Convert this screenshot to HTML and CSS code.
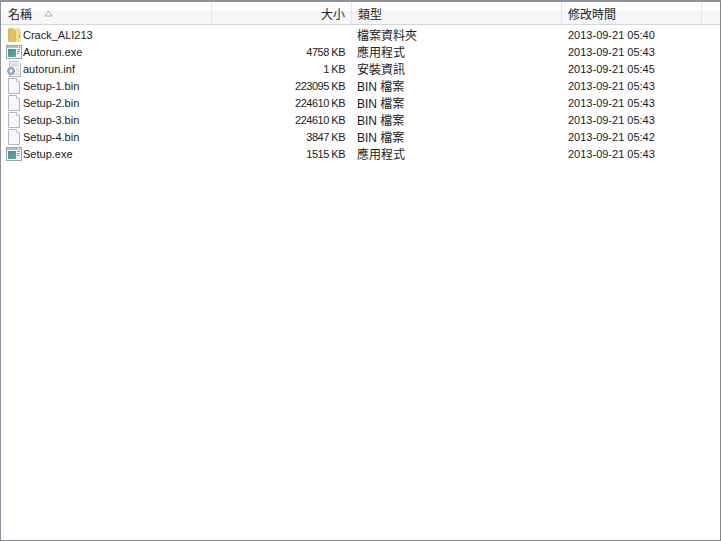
FILE: index.html
```html
<!DOCTYPE html>
<html lang="zh-Hant">
<head>
<meta charset="utf-8">
<title>檔案清單</title>
<link rel="stylesheet" href="styles.css">
</head>
<body>
<svg class="defs" width="0" height="0" aria-hidden="true">
  <defs>
    <linearGradient id="folderBack" x1="0" y1="0" x2="1" y2="0">
      <stop offset="0" stop-color="#d8b455"/><stop offset="1" stop-color="#e5c874"/>
    </linearGradient>
    <linearGradient id="folderFront" x1="0" y1="0" x2="1" y2="0">
      <stop offset="0" stop-color="#fbeeb8"/><stop offset="1" stop-color="#ecd07c"/>
    </linearGradient>
    <linearGradient id="appGrad" x1="0" y1="0" x2="1" y2="1">
      <stop offset="0" stop-color="#3f86b4"/><stop offset="1" stop-color="#6aae7f"/>
    </linearGradient>
    <symbol id="folder" viewBox="0 0 16 16">
      <path d="M2 2.500 Q2 1 3.500 1 L7 1 L7 15 L3.500 15 Q2 15 2 13.500Z" fill="url(#folderBack)"/>
      <path d="M7 1.500 L13 1 Q14.500 1 14.500 2.500 L14.500 14 Q14.500 15 13 15 L7 15Z" fill="url(#folderFront)"/>
      <path d="M7 1.500 L10 3 L10 15 L7 15Z" fill="#e2bd5c"/>
      <rect x="13" y="8" width="1" height="2" fill="#6c97c9"/>
    </symbol>
    <symbol id="app" viewBox="0 0 16 16">
      <rect x="0.500" y="1.500" width="15" height="13" fill="#f6f8fb" stroke="#98a3af"/>
      <rect x="1" y="2" width="14" height="2" fill="#b6bfc9"/>
      <rect x="12" y="2" width="1" height="1" fill="#fff"/>
      <rect x="14" y="2" width="1" height="1" fill="#fff"/>
      <rect x="2" y="5" width="8" height="8" fill="url(#appGrad)"/>
      <rect x="11" y="5" width="3" height="1" fill="#7f97b0"/>
      <rect x="11" y="7" width="3" height="1" fill="#7f97b0"/>
      <rect x="11" y="9" width="2" height="1" fill="#7f97b0"/>
    </symbol>
    <symbol id="blank" viewBox="0 0 16 16">
      <path d="M2.500 0.500 L10.500 0.500 L13.500 3.500 L13.500 15.500 L2.500 15.500Z" fill="#f7f7f7" stroke="#b0b3b8"/>
      <path d="M10.500 0.500 L10.500 3.500 L13.500 3.500" fill="#fff" stroke="#c2c5ca"/>
    </symbol>
    <symbol id="inf" viewBox="0 0 16 16">
      <path d="M3.500 0.500 L12 0.500 L14.500 3 L14.500 15.500 L3.500 15.500Z" fill="#f7f8f9" stroke="#b3b7bd"/>
      <path d="M5 3H12M5 5H13M10 8H13M11 10H13M5 13H13" stroke="#bfc4cb"/>
      <circle cx="5" cy="10" r="3.500" fill="#9ab2ca" stroke="#5f7993" stroke-dasharray="1.500 1"/>
      <circle cx="5" cy="10" r="1.500" fill="#eef3f8"/>
    </symbol>
  </defs>
</svg>
<main class="frame">
  <header class="head">
    <div class="hcell name-h">名稱<svg class="sort" width="9" height="7" viewBox="0 0 9 7"><path d="M4.500 1 L8 6 L1 6Z" fill="#fff" stroke="#a7acb3"/></svg></div>
    <div class="hcell size-h">大小</div>
    <div class="hcell type-h">類型</div>
    <div class="hcell date-h">修改時間</div>
    <div class="hcell rest-h"></div>
  </header>
  <ul class="list">
    <li class="row"><span class="name"><svg class="ic"><use href="#folder"/></svg>Crack_ALI213</span><span class="size"></span><span class="type">檔案資料夾</span><span class="date">2013-09-21 05:40</span></li>
    <li class="row"><span class="name"><svg class="ic"><use href="#app"/></svg>Autorun.exe</span><span class="size">4758 KB</span><span class="type">應用程式</span><span class="date">2013-09-21 05:43</span></li>
    <li class="row"><span class="name"><svg class="ic"><use href="#inf"/></svg>autorun.inf</span><span class="size">1 KB</span><span class="type">安裝資訊</span><span class="date">2013-09-21 05:45</span></li>
    <li class="row"><span class="name"><svg class="ic"><use href="#blank"/></svg>Setup-1.bin</span><span class="size">223095 KB</span><span class="type">BIN 檔案</span><span class="date">2013-09-21 05:43</span></li>
    <li class="row"><span class="name"><svg class="ic"><use href="#blank"/></svg>Setup-2.bin</span><span class="size">224610 KB</span><span class="type">BIN 檔案</span><span class="date">2013-09-21 05:43</span></li>
    <li class="row"><span class="name"><svg class="ic"><use href="#blank"/></svg>Setup-3.bin</span><span class="size">224610 KB</span><span class="type">BIN 檔案</span><span class="date">2013-09-21 05:43</span></li>
    <li class="row"><span class="name"><svg class="ic"><use href="#blank"/></svg>Setup-4.bin</span><span class="size">3847 KB</span><span class="type">BIN 檔案</span><span class="date">2013-09-21 05:42</span></li>
    <li class="row"><span class="name"><svg class="ic"><use href="#app"/></svg>Setup.exe</span><span class="size">1515 KB</span><span class="type">應用程式</span><span class="date">2013-09-21 05:43</span></li>
  </ul>
</main>
</body>
</html>
```
FILE: styles.css
```css
html, body {
  margin: 0;
  padding: 0;
  height: 100%;
}
body {
  background: #fff;
  font-family: "Liberation Sans", "Noto Sans CJK TC", sans-serif;
  font-size: 11px;
  color: #1a1a24;
  overflow: hidden;
}
.defs {
  display: block;
  height: 0;
}
.frame {
  box-sizing: border-box;
  height: 541px;
  border: 1px solid #85858a;
  border-left-color: #8a919e;
  border-top-width: 2px;
  border-top-color: #8d929c;
}
.head {
  display: grid;
  grid-template-columns: 211px 140px 210px 140px 1fr;
  height: 22px;
  border-bottom: 1px solid #d5d5d5;
  background: linear-gradient(#fff 0, #fff 9px, #f5f6f7 9px, #f5f6f7 100%);
}
.hcell {
  display: flex;
  align-items: center;
  border-right: 1px solid #e3e5e7;
  font-size: 12px;
  color: #222;
}
.name-h { padding-left: 7px; }
.size-h { justify-content: flex-end; padding-right: 6px; }
.type-h { padding-left: 6px; }
.date-h { padding-left: 6px; }
.rest-h { border-right: 0; }
.sort { margin-left: 12px; }
.list {
  list-style: none;
  margin: 0;
  padding: 1px 0 0;
}
.row {
  display: grid;
  grid-template-columns: 210px 134px 210px 1fr;
  height: 17px;
  align-items: center;
  white-space: nowrap;
}
.name {
  display: flex;
  align-items: center;
  padding-left: 5px;
}
.ic {
  width: 16px;
  height: 16px;
  margin-right: 1px;
  flex: none;
}
.size {
  text-align: right;
  letter-spacing: -0.5px;
}
.type {
  padding-left: 12px;
  font-size: 12px;
}
.date { padding-left: 13px; }
```
